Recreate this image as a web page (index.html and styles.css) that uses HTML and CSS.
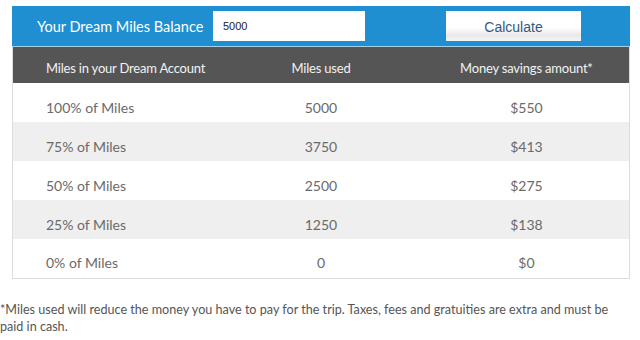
FILE: index.html
```html
<!DOCTYPE html>
<html>
<head>
<meta charset="utf-8">
<link rel="stylesheet" href="styles.css">
</head>
<body>
<div class="calc">
  <div class="bar">
    <span class="bar-label">Your Dream Miles Balance</span>
    <input class="bar-input" type="text" value="5000">
    <button class="bar-btn">Calculate</button>
  </div>
  <table class="miles">
    <thead>
      <tr><th class="c1">Miles in your Dream Account</th><th>Miles used</th><th>Money savings amount*</th></tr>
    </thead>
    <tbody>
      <tr><td class="c1">100% of Miles</td><td>5000</td><td>$550</td></tr>
      <tr class="alt"><td class="c1">75% of Miles</td><td>3750</td><td>$413</td></tr>
      <tr><td class="c1">50% of Miles</td><td>2500</td><td>$275</td></tr>
      <tr class="alt"><td class="c1">25% of Miles</td><td>1250</td><td>$138</td></tr>
      <tr><td class="c1">0% of Miles</td><td>0</td><td>$0</td></tr>
    </tbody>
  </table>
  <p class="note">*Miles used will reduce the money you have to pay for the trip. Taxes, fees and gratuities are extra and must be paid in cash.</p>
</div>
</body>
</html>
```
FILE: styles.css
```css
html, body { margin: 0; padding: 0; background: #fff; }
body { padding: 6px 0 0 12px; font-family: Lato, "Open Sans", sans-serif; }
.calc { width: 618px; }
.bar {
  height: 40px;
  background: #1f8fd2;
  border-bottom: 1px solid #a9cfe6;
  display: flex;
  align-items: center;
  box-sizing: content-box;
}
.bar-label {
  color: #fff;
  font-size: 14.5px;
  margin-left: 25px;
  width: 176px;
}
.bar-input {
  width: 152px;
  height: 30px;
  box-sizing: border-box;
  border: none;
  background: #fff;
  font-family: Arial, "Liberation Sans", sans-serif;
  font-size: 11px;
  padding: 0 0 0 10px;
  color: #222;
  outline: none;
  margin: 0;
}
.bar-btn {
  margin-left: 81px;
  width: 135px;
  height: 30px;
  border: none;
  background: linear-gradient(#ffffff 0%, #ffffff 55%, #e9e9e9 80%, #f4f4f4 100%);
  font-family: "Liberation Sans", Arial, sans-serif;
  font-size: 14px;
  color: #34577f;
  padding: 2px 0 0;
}
.miles {
  width: 618px;
  border-collapse: collapse;
  table-layout: fixed;
  border-left: 1px solid #dcdcdc;
  border-right: 1px solid #dcdcdc;
  border-bottom: 1px solid #dcdcdc;
}
.miles thead tr { height: 36px; }
.miles tbody tr { height: 39px; }
.miles th {
  background: #555555;
  color: #f2f2f2;
  font-weight: normal;
  font-size: 13px;
  padding: 5px 0 0;
  text-align: center;
  letter-spacing: -0.2px;
}
.miles td {
  padding: 9px 0 0;
  font-size: 14px;
  color: #6a6a6a;
  text-align: center;
}
.miles .c1 { text-align: left; padding-left: 33px; }
.miles tr.alt td { background: #efefef; }
.note {
  margin: 22px 0 0 -12px;
  width: 618px;
  font-size: 12.6px;
  line-height: 17px;
  color: #555;
}
```
